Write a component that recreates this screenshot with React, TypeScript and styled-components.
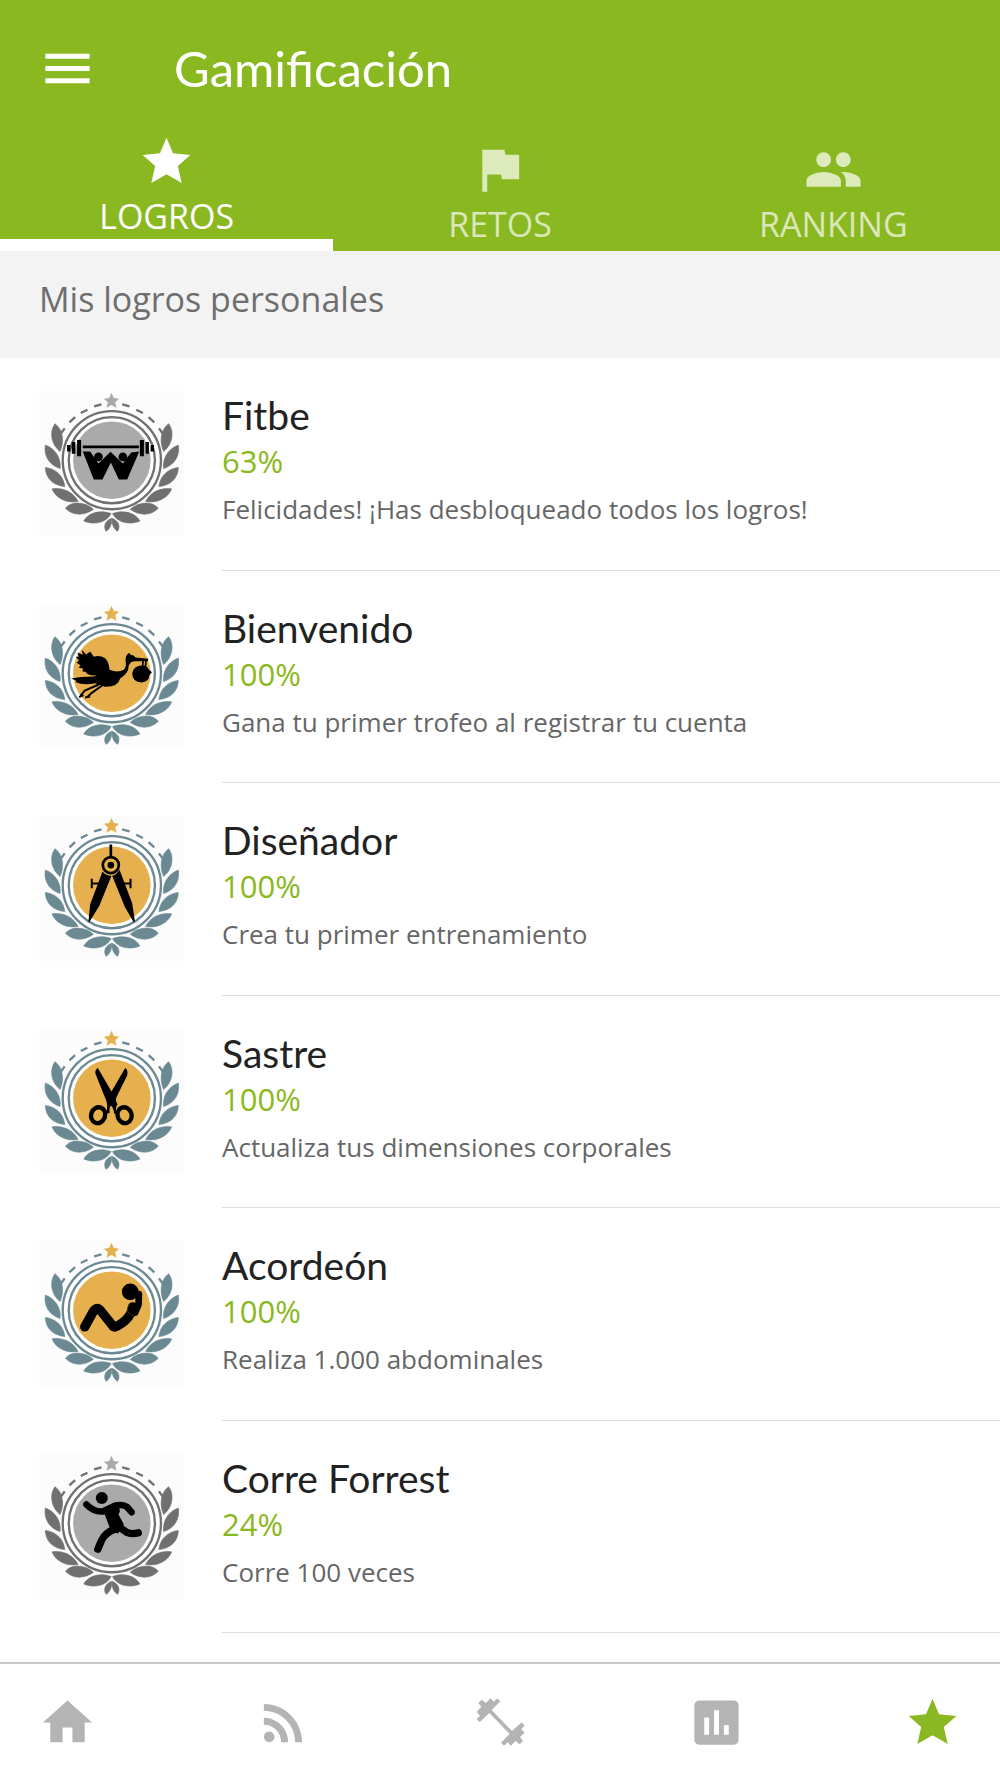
import React from 'react';
import styled, { createGlobalStyle } from 'styled-components';
import { MdMenu, MdFlag, MdPeople, MdHome, MdRssFeed, MdAssessment } from 'react-icons/md';

const GREEN = '#8ab820';
const SANS = '"Open Sans", "Noto Sans", sans-serif';
const TITLE = 'Lato, "Open Sans", sans-serif';

const GlobalStyle = createGlobalStyle`
  *, *::before, *::after { box-sizing: border-box; }
  body { margin: 0; background: #fff; font-family: ${SANS}; }
  h1, h2, h3, p, ul { margin: 0; padding: 0; font-weight: 400; }
  ul { list-style: none; }
  button { border: 0; padding: 0; background: none; color: inherit; font: inherit; cursor: pointer; }
`;

const Screen = styled.div`
  display: flex;
  flex-direction: column;
  min-height: 100vh;
`;

const Header = styled.header`
  background: ${GREEN};
  color: #fff;
`;

const Toolbar = styled.div`
  display: flex;
  align-items: center;
  gap: 77px;
  height: 132px;
  padding: 4px 38px 0;
`;

const IconButton = styled.button`
  display: flex;
  font-size: 59px;
`;

const PageTitle = styled.h1`
  font-family: ${TITLE};
  font-size: 49px;
  line-height: 60px;
`;

const Tabs = styled.div`
  display: grid;
  grid-template-columns: repeat(3, 1fr);
`;

const Tab = styled.button<{ $active?: boolean }>`
  && {
    display: flex;
    flex-direction: column;
    align-items: center;
    justify-content: flex-end;
    gap: 3px;
    height: 119px;
    border-bottom: ${(p) => (p.$active ? '12px solid #fff' : '4px solid transparent')};
    color: ${(p) => (p.$active ? '#fff' : 'rgba(255, 255, 255, 0.7)')};
    font-size: 34px;
    line-height: 45px;
  }
`;

const TabIcon = styled.span`
  display: flex;
  font-size: 59px;
`;

const SectionTitle = styled.h2`
  padding: 25px 39px 36px;
  background: #f3f3f3;
  color: #6e6e6e;
  font-size: 34px;
  line-height: 46px;
`;

const Main = styled.main`
  display: flex;
  flex: 1;
  flex-direction: column;
`;

const List = styled.ul`
  display: grid;
  flex: 1;
  grid-auto-rows: minmax(212px, 1fr);
  padding-bottom: 29px;
`;

const Row = styled.li`
  display: flex;
  gap: 38px;
  padding-left: 39px;
`;

const BadgeImage = styled.svg`
  flex: none;
  width: 145px;
  height: 145px;
  margin-top: 33px;
`;

const Details = styled.div`
  flex: 1;
  padding-top: 33px;
  border-bottom: 1px solid #dedede;
`;

const Name = styled.h3`
  color: #222;
  font-family: ${TITLE};
  font-size: 39px;
  line-height: 48px;
`;

const Percent = styled.p`
  color: ${GREEN};
  font-size: 31px;
  line-height: 44px;
`;

const Description = styled.p`
  margin-top: 4px;
  color: #666;
  font-size: 26px;
  line-height: 44px;
`;

const BottomNav = styled.nav`
  display: flex;
  justify-content: space-between;
  padding: 29px 38px 26px;
  border-top: 2px solid #c8c8c8;
  background: #fff;
`;

const NavLink = styled.a<{ $active?: boolean }>`
  display: flex;
  color: ${(p) => (p.$active ? GREEN : '#b4b4b4')};
  font-size: 59px;
`;

const StarIcon = () => (
  <svg width="1em" height="1em" viewBox="0 0 177 177" fill="currentColor" aria-hidden="true">
    <path d="M88.500 17 L108 64 L160 69 L122.500 102 L134 153 L88.500 127 L43 153 L54.500 102 L17 69 L69 64 Z" />
  </svg>
);

const DumbbellIcon = () => (
  <svg width="1em" height="1em" viewBox="1 3 177 177" fill="currentColor" aria-hidden="true">
    <path d="M33 23L46 33L59 19L70 29L80 19L89 28L63 54L124 117L153 91L162 101L152 111L162 122L148 135L157 147L147 157L134 147L121 161L110 151L100 161L91 152L117 126L56 63L27 91L18 81L28 71L18 60L32 44L23 33Z" />
  </svg>
);

type Emblem = 'barbell' | 'stork' | 'compass' | 'scissors' | 'situp' | 'runner';

const LEAVES = [
  'M75 133C61 150 58 190 90 216C102 190 101 152 75 133Z',
  'M46 197C41 226 55 256 90 267C94 240 78 208 46 197Z',
  'M46 264C47 296 68 317 104 321C101 289 76 267 46 264Z',
  'M66 328C78 356 108 371 144 366C130 338 100 323 66 328Z',
  'M106 386C124 364 164 366 190 389C162 409 128 409 106 386Z',
  'M161 424C176 398 212 390 243 402C228 430 192 437 161 424Z',
  'M228 455C218 440 226 423 244 416C246 432 240 447 228 455Z',
];

const LaurelSide = () => (
  <>
    {LEAVES.map((d) => (
      <path key={d} d={d} stroke="currentColor" strokeWidth="2" />
    ))}
    <path
      d="M192 81L214 75M152 101L172 91M118 129L135 113M92 163L104 147"
      fill="none"
      stroke="currentColor"
      strokeWidth="7"
    />
  </>
);

const EmblemShape = ({ kind }: { kind: Emblem }) => {
  switch (kind) {
    case 'barbell':
      return (
        <>
          <path d="M111 197h10v19h-10zM125 188h11v35h-11zM141 182h12v48h-12zM158 198h168v8H158zM329 182h12v48h-12zM346 188h10v35h-10zM361 197h10v19h-10z" />
          <path d="M158 216H180L205 252L241 217L278 252L303 219L327 216L291 300H266L242 249L217 300H191Z" />
          <circle cx="205" cy="232" r="13" />
          <circle cx="278" cy="232" r="13" />
        </>
      );
    case 'stork':
      return (
        <>
          <path d="M155 172L168 186Q180 176 181 178L191 193Q208 187 224 197Q236 207 238 232Q262 242 281 232Q290 222 286 204Q286 190 293 184L298 182L301 187Q311 188 316 195L354 199L353 206L315 206Q299 206 295 222Q296 240 270 258Q263 284 225 283Q208 279 196 272Q160 279 137 269L139 265L123 258Q150 252 191 252L201 247Q183 252 171 244L166 238L157 237L159 229L146 225L151 218L139 210L147 204L137 193L146 193L142 180L158 187Z" />
          <path d="M206 276L164 294L151 310M216 279L185 301L171 314M160 308L147 314M180 312L165 315" fill="none" stroke="#000" strokeWidth="6" />
          <path d="M339 202L337 220M347 202L346 222" stroke="#000" strokeWidth="5" />
          <path d="M336 218Q350 218 354 229L365 239L358 247Q356 269 334 270Q306 268 306 242Q310 219 336 218Z" />
        </>
      );
    case 'compass':
      return (
        <>
          <path d="M238 120h8v38h-8zM182 223h6v28h-6zM188 234h24v6h-24zM276 234h22v6h-22zM298 223h6v28h-6z" />
          <circle cx="242" cy="182" r="24" fill="none" stroke="#000" strokeWidth="8" />
          <circle cx="242" cy="182" r="10" />
          <path d="M217 201Q229 215 244 214L208 303L177 354L175 350L180 300ZM268 196Q258 213 246 214L284 307L311 354L314 350L306 296Z" />
        </>
      );
    case 'scissors':
      return (
        <>
          <path d="M203 152Q194 157 196 169L226 244Q232 254 231 267L229 287L238 287Q237 268 243 265Q249 268 252 289L258 287Q255 270 262 260Q255 250 258 241L291 174Q294 157 285 152L244 222Z" />
          <ellipse cx="204" cy="293" rx="21" ry="24" fill="none" stroke="#000" strokeWidth="13" transform="rotate(20 204 293)" />
          <ellipse cx="283" cy="293" rx="21" ry="24" fill="none" stroke="#000" strokeWidth="13" transform="rotate(-20 283 293)" />
        </>
      );
    case 'situp':
      return (
        <>
          <circle cx="300" cy="187" r="25" />
          <path d="M164 292L189 247Q199 229 212 244L248 289Q251 295 260 290Q289 276 302 251L307 232" fill="none" stroke="#000" strokeWidth="28" strokeLinecap="round" strokeLinejoin="round" />
          <path d="M326 194L325 225L315 249" fill="none" stroke="#000" strokeWidth="20" strokeLinecap="round" strokeLinejoin="round" />
          <path d="M298 223Q288 236 293 247Q300 257 311 259" fill="none" stroke="#5c4420" strokeWidth="2" />
        </>
      );
    case 'runner':
      return (
        <>
          <circle cx="215" cy="167" r="18" />
          <path d="M169 186Q191 209 218 207L254 190Q275 184 290 193L304 209" fill="none" stroke="#000" strokeWidth="20" strokeLinecap="round" strokeLinejoin="round" />
          <path d="M220 206L257 183Q269 192 269 207L265 216L281 246L264 273L242 264Z" />
          <path d="M263 251L289 269Q302 276 324 271M258 259Q226 269 214 294L203 320" fill="none" stroke="#000" strokeWidth="22" strokeLinecap="round" />
        </>
      );
  }
};

const Badge = ({ kind, unlocked }: { kind: Emblem; unlocked: boolean }) => {
  const leaf = unlocked ? '#6b8993' : '#707070';
  const disc = unlocked ? '#e6b04e' : '#aaaaaa';
  return (
    <BadgeImage viewBox="27 35 434 434" color={leaf} fill={leaf} aria-hidden="true">
      <rect x="27" y="35" width="434" height="434" fill="#fcfcfc" />
      <LaurelSide />
      <g transform="translate(490 0) scale(-1 1)">
        <LaurelSide />
      </g>
      <circle cx="245" cy="242" r="147" fill="#fff" stroke={leaf} strokeWidth="7" />
      <circle cx="245" cy="242" r="129" fill="#fff" stroke={leaf} strokeWidth="7" />
      <circle cx="245" cy="242" r="116" fill={disc} />
      <path
        d="M244 40L251 56L267 58L255 69L259 85L244 77L229 85L233 69L221 58L237 56Z"
        fill={disc}
      />
      <g fill="#000">
        <EmblemShape kind={kind} />
      </g>
    </BadgeImage>
  );
};

const ACHIEVEMENTS: { name: string; percent: number; text: string; kind: Emblem }[] = [
  { name: 'Fitbe', percent: 63, text: 'Felicidades! ¡Has desbloqueado todos los logros!', kind: 'barbell' },
  { name: 'Bienvenido', percent: 100, text: 'Gana tu primer trofeo al registrar tu cuenta', kind: 'stork' },
  { name: 'Diseñador', percent: 100, text: 'Crea tu primer entrenamiento', kind: 'compass' },
  { name: 'Sastre', percent: 100, text: 'Actualiza tus dimensiones corporales', kind: 'scissors' },
  { name: 'Acordeón', percent: 100, text: 'Realiza 1.000 abdominales', kind: 'situp' },
  { name: 'Corre Forrest', percent: 24, text: 'Corre 100 veces', kind: 'runner' },
];

export default function App() {
  return (
    <Screen>
      <GlobalStyle />
      <Header>
        <Toolbar>
          <IconButton type="button" aria-label="Menú">
            <MdMenu />
          </IconButton>
          <PageTitle>Gamificación</PageTitle>
        </Toolbar>
        <Tabs role="tablist">
          <Tab type="button" role="tab" aria-selected="true" $active>
            <TabIcon><StarIcon /></TabIcon>
            LOGROS
          </Tab>
          <Tab type="button" role="tab" aria-selected="false">
            <TabIcon><MdFlag /></TabIcon>
            RETOS
          </Tab>
          <Tab type="button" role="tab" aria-selected="false">
            <TabIcon><MdPeople /></TabIcon>
            RANKING
          </Tab>
        </Tabs>
      </Header>
      <Main>
        <SectionTitle>Mis logros personales</SectionTitle>
        <List>
          {ACHIEVEMENTS.map((a) => (
            <Row key={a.name}>
              <Badge kind={a.kind} unlocked={a.percent === 100} />
              <Details>
                <Name>{a.name}</Name>
                <Percent>{a.percent}%</Percent>
                <Description>{a.text}</Description>
              </Details>
            </Row>
          ))}
        </List>
      </Main>
      <BottomNav>
        <NavLink href="#inicio" aria-label="Inicio"><MdHome /></NavLink>
        <NavLink href="#noticias" aria-label="Noticias"><MdRssFeed /></NavLink>
        <NavLink href="#ejercicios" aria-label="Ejercicios"><DumbbellIcon /></NavLink>
        <NavLink href="#estadisticas" aria-label="Estadísticas"><MdAssessment /></NavLink>
        <NavLink href="#logros" aria-label="Logros" $active><StarIcon /></NavLink>
      </BottomNav>
    </Screen>
  );
}
